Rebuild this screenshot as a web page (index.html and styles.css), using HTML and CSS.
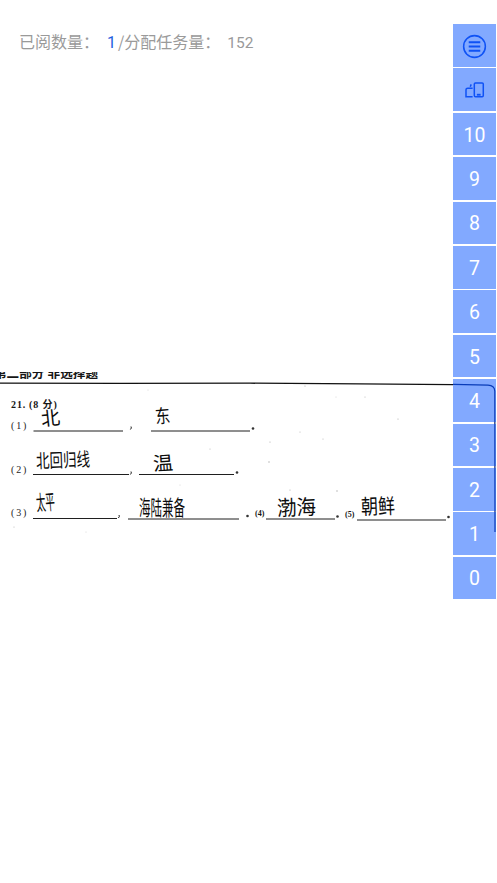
FILE: index.html
```html
<!DOCTYPE html>
<html lang="zh-CN">
<head>
<meta charset="utf-8">
<title>阅卷</title>
<link rel="stylesheet" href="styles.css">
</head>
<body>
<main class="page">
  <header class="stats">
    <span>已阅数量：</span><span class="stats-done">1</span><span>/分配任务量：</span><span class="stats-total">152</span>
  </header>
  <svg class="scan" viewBox="0 372 497 166" aria-label="答题卡">
    <text class="print heading" x="-6" y="378" textLength="104" lengthAdjust="spacingAndGlyphs">第二部分 非选择题</text>
    <path class="rule-top" d="M0 383.2 L120 383.4 L250 383.2 L360 383.8 L453 384.6"/>
    <path class="pen-blue" d="M453 384.4 L488 385.2 Q494.500 385.400 494.800 391 L495 532"/>

    <text class="print q" x="11" y="408">21.</text>
    <text class="print q" x="29" y="408">(8 分)</text>
    <text class="print label" x="11" y="429">(1)</text>
    <text class="print label" x="11" y="472.500">(2)</text>
    <text class="print label" x="11" y="516">(3)</text>
    <text class="print small" x="255" y="516">(4)</text>
    <text class="print small" x="345" y="517">(5)</text>

    <path class="rule" d="M33.500 431 H123 M151 431 H250 M33 474.500 H129 M139 474.500 H234 M33 518.500 H117 M128 519 H239 M266 519 H335 M357 520 H446"/>
    <path class="commas" d="M131 426.500 q1 1.500 -.6 3 M131 471.500 q1 1.500 -.6 3 M119 515 q1 1.500 -.6 3"/>
    <g class="marks">
      <circle cx="253" cy="428.500" r="1.300"/><circle cx="237" cy="472.500" r="1.300"/>
      <circle cx="247.500" cy="516" r="1.300"/><circle cx="337.500" cy="516.500" r="1.300"/><circle cx="448.500" cy="517" r="1.300"/>
    </g>
    <g class="specks">
      <circle cx="305" cy="386" r=".6"/><circle cx="365" cy="397" r=".5"/><circle cx="398" cy="419" r=".6"/>
      <circle cx="270" cy="442" r=".6"/><circle cx="269" cy="462" r=".7"/><circle cx="300" cy="432" r=".5"/>
      <circle cx="323" cy="439" r=".5"/><circle cx="336" cy="397" r=".4"/><circle cx="290" cy="490" r=".6"/>
      <circle cx="337" cy="491" r=".7"/><circle cx="210" cy="449" r=".5"/><circle cx="148" cy="390" r=".4"/>
      <circle cx="14" cy="527" r=".5"/><circle cx="86" cy="532" r=".4"/><circle cx="180" cy="485" r=".4"/>
    </g>

    <text class="hand" x="41" y="425" textLength="19" lengthAdjust="spacingAndGlyphs" transform="rotate(-6 50 418)">北</text>
    <text class="hand" x="155" y="423" textLength="15" lengthAdjust="spacingAndGlyphs" transform="rotate(-5 162 415)">东</text>
    <text class="hand" x="36" y="467" textLength="54" lengthAdjust="spacingAndGlyphs" transform="rotate(-2 63 460)">北回归线</text>
    <text class="hand" x="153" y="470" textLength="20" lengthAdjust="spacingAndGlyphs" transform="rotate(-4 163 463)">温</text>
    <text class="hand tall" x="36" y="510" textLength="19" lengthAdjust="spacingAndGlyphs" transform="rotate(-5 46 503)">太平</text>
    <text class="hand tall" x="139" y="515" textLength="46" lengthAdjust="spacingAndGlyphs">海陆兼备</text>
    <text class="hand tall" x="277" y="515" textLength="39" lengthAdjust="spacingAndGlyphs" transform="rotate(-2 296 507)">渤海</text>
    <text class="hand tall" x="361" y="514" textLength="34" lengthAdjust="spacingAndGlyphs" transform="rotate(-2 378 506)">朝鲜</text>
  </svg>
  <nav class="rail">
    <button class="key" type="button" aria-label="菜单">
      <svg class="icon" viewBox="0 0 26 26"><circle cx="13" cy="13" r="11.300"/><path class="icon-bars" d="M7 8.500 H19 M7 13 H19 M7 17.500 H19"/></svg>
    </button>
    <button class="key" type="button" aria-label="旋转">
      <svg class="icon" viewBox="0 0 22 18"><rect x="10.800" y="1" width="9.500" height="14.500" rx="1.200"/><path d="M9 6.500 H3.800 Q2 6.500 2 8.200 V15.500 H9 M7.500 2.500 L6.500 5"/><path class="icon-bars" d="M13.500 13.500 H17.500"/></svg>
    </button>
    <button class="key" type="button">10</button>
    <button class="key" type="button">9</button>
    <button class="key" type="button">8</button>
    <button class="key" type="button">7</button>
    <button class="key" type="button">6</button>
    <button class="key" type="button">5</button>
    <button class="key" type="button">4</button>
    <button class="key" type="button">3</button>
    <button class="key" type="button">2</button>
    <button class="key" type="button">1</button>
    <button class="key" type="button">0</button>
  </nav>
</main>
</body>
</html>
```
FILE: styles.css
```css
* { box-sizing: border-box; }
html, body { margin: 0; background: #fff; }
.page {
  position: relative;
  width: 497px;
  height: 883px;
  overflow: hidden;
  font-family: "Noto Sans CJK SC", Roboto, sans-serif;
}
.stats {
  display: flex;
  align-items: baseline;
  height: 372px;
  padding: 29px 0 0 19px;
  font-size: 16px;
  line-height: 24px;
  color: #9a9a9a;
}
.stats-done { margin-left: 8px; margin-right: 2px; color: #1f5fe0; font-family: Roboto, sans-serif; }
.stats-total { margin-left: 7px; font-size: 15.500px; font-family: Roboto, sans-serif; }
.scan { display: block; width: 497px; height: 166px; }
.print { font-family: "Liberation Serif", "Noto Sans CJK SC", serif; fill: #161616; }
.heading { font-size: 12px; font-weight: 700; }
.q { font-size: 10px; font-weight: 700; letter-spacing: .9px; }
.label { font-size: 10px; letter-spacing: 1.800px; fill: #222; }
.small { font-size: 8px; font-weight: 700; }
.rule-top { fill: none; stroke: #111; stroke-width: 1.300; }
.pen-blue { fill: none; stroke: #0b2370; stroke-width: 1.200; }
.rule { fill: none; stroke: #1f1f1f; stroke-width: 1; }
.commas { fill: none; stroke: #222; stroke-width: 1; }
.marks { fill: #333; }
.specks { fill: #aaa; }
.hand { font-family: "Noto Sans CJK SC", sans-serif; font-size: 19px; fill: #0c0c0c; }
.tall { font-size: 21px; }
.rail {
  position: absolute;
  top: 24px;
  right: 1.300px;
  display: flex;
  flex-direction: column;
  gap: 1.800px;
  width: 42.500px;
}
.key {
  display: flex;
  align-items: center;
  justify-content: center;
  height: 42.600px;
  padding: 2px 0 0;
  border: 0;
  background: rgba(5, 84, 255, .5);
  color: #fff;
  font-family: Roboto, sans-serif;
  font-size: 19.500px;
}
.icon { fill: none; stroke: #0f52f5; stroke-width: 1.600; }
.icon-bars { stroke-width: 2; }
.key:first-child .icon { width: 25px; height: 25px; }
.key:nth-child(2) .icon { width: 21px; height: 17px; }
```
